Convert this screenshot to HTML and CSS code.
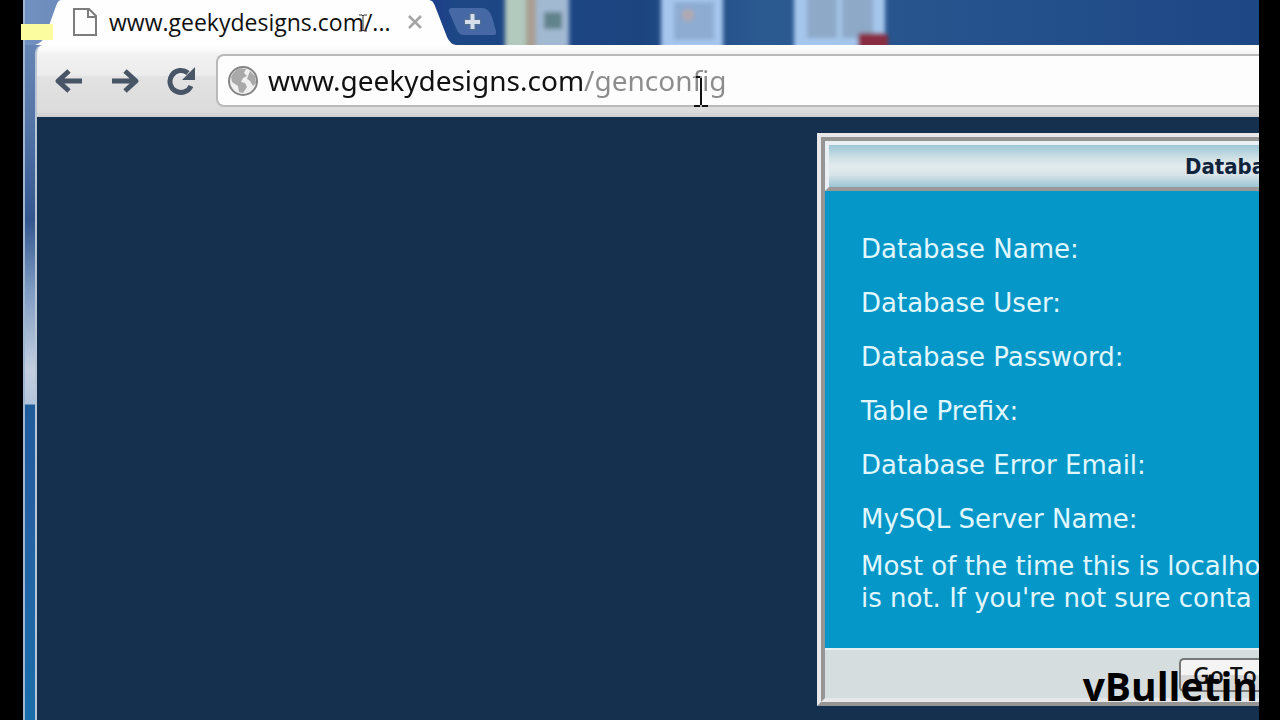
FILE: index.html
```html
<!DOCTYPE html>
<html lang="en">
<head>
<meta charset="utf-8">
<title>www.geekydesigns.com/genconfig</title>
<link rel="stylesheet" href="styles.css">
</head>
<body>
<div class="screen">
  <div class="window">
    <header class="tabstrip">
      <svg class="wallpaper" width="1236" height="45" viewBox="0 0 1236 45" aria-hidden="true">
        <defs>
          <filter id="soft" x="-20%" y="-20%" width="140%" height="140%"><feGaussianBlur stdDeviation="2"/></filter>
          <linearGradient id="sky"><stop offset="0" stop-color="#7391c0"/><stop offset=".03" stop-color="#6d8bbb"/><stop offset=".3" stop-color="#1d2f96"/><stop offset=".35" stop-color="#1d4785"/><stop offset=".5" stop-color="#1c4580"/><stop offset=".6" stop-color="#2b5a91"/><stop offset="1" stop-color="#1d4785"/></linearGradient>
        </defs>
        <rect width="1236" height="45" fill="url(#sky)"/>
        <g filter="url(#soft)">
          <rect x="482" y="-8" width="64" height="62" fill="#a2b9d2"/>
          <rect x="482" y="-8" width="21" height="62" fill="#b2c9bd"/>
          <rect x="503" y="-8" width="10" height="62" fill="#a99f92"/>
          <rect x="521" y="12" width="18" height="17" fill="#60838c"/>
          <rect x="638" y="-8" width="62" height="62" fill="#a6c6ed"/>
          <rect x="651" y="2" width="40" height="38" fill="#8eacd2"/>
          <circle cx="665" cy="15" r="6" fill="#b3a9ae"/>
          <rect x="771" y="-8" width="91" height="62" fill="#a5c6ed"/>
          <rect x="784" y="-4" width="66" height="42" fill="#8ea9c8"/>
          <rect x="814" y="-4" width="5" height="50" fill="#a5c6e8"/>
          <rect x="835" y="33" width="30" height="20" rx="4" fill="#892f43"/>
        </g>
        <path d="M12 45C17 43 20 41 23 34L33 6Q35 0 38 0H406Q410 0 412 6L424 37Q427 44 433 45Z" fill="#fefefe"/>
        <path d="M0 0V45" stroke="#a9bed8" stroke-width="3"/>
      </svg>
      <div class="tab">
        <svg width="26" height="28" viewBox="0 0 26 28" fill="#fdfdfd" stroke="#7c7c7c" stroke-width="2" aria-hidden="true"><path d="M2 1H17L24 8V27H2ZM16 1V9H24"/></svg>
        <span class="tab-title">www.geekydesigns.com/...</span>
        <button class="close" aria-label="Close tab"><svg width="14" height="14" viewBox="0 0 14 14" stroke="#a4a4a4" stroke-width="2.500"><path d="M1 1L13 13M13 1L1 13"/></svg></button>
      </div>
      <button class="newtab" aria-label="New tab"><svg width="48" height="30" viewBox="0 0 48 30"><path d="M4 1H34Q41 1 44 10L48 24Q49 28 46 28H16Q11 28 9 23L1 5Q0 1 4 1Z" fill="#4668a5"/><path d="M16 15H33M24.500 6V23" stroke="#526d96" stroke-width="7"/><path d="M17 15H32M24.500 7V22" stroke="#d5dfec" stroke-width="4"/></svg></button>
    </header>
    <div class="frame">
      <nav class="toolbar">
        <button class="tool" aria-label="Back"><svg width="30" height="28" viewBox="0 0 30 28"><path d="M28 14H5M15 4L4 14L15 24" fill="none" stroke="#475567" stroke-width="5" stroke-linejoin="round"/></svg></button>
        <button class="tool" aria-label="Forward"><svg width="30" height="28" viewBox="0 0 30 28"><path d="M2 14H25M15 4L26 14L15 24" fill="none" stroke="#475567" stroke-width="5" stroke-linejoin="round"/></svg></button>
        <button class="tool" aria-label="Reload"><svg width="30" height="28" viewBox="0 0 30 28"><path d="M25 19A11 11 0 1 1 22 6" fill="none" stroke="#475567" stroke-width="5"/><path d="M29 0V13H16Z" fill="#475567"/></svg></button>
        <div class="omnibox">
          <svg width="32" height="32" viewBox="0 0 32 32" aria-hidden="true"><circle cx="16" cy="16" r="14" fill="#f0f0f0" stroke="#858585" stroke-width="2"/><path d="M6 8L12 3L19 4L17 8L20 11L16 13L14 17L18 18L20 22L16 28L12 27L11 21L5 17L4 12ZM23 6L28 11L29 18L26 21L23 16L20 14Z" fill="#a9a9a9"/></svg>
          <input class="url" type="text" aria-label="Address" value="www.geekydesigns.com/genconfig">
        </div>
      </nav>
      <main class="page">
        <section class="panel">
          <h1 class="panel-head">Databa</h1>
          <div class="panel-body">
            <p class="field">Database Name:</p>
            <p class="field">Database User:</p>
            <p class="field">Database Password:</p>
            <p class="field">Table Prefix:</p>
            <p class="field">Database Error Email:</p>
            <p class="field">MySQL Server Name:</p>
            <p class="note">Most of the time this is localho<br>is not. If you're not sure conta</p>
          </div>
          <div class="panel-foot"><button class="go">Go To</button></div>
        </section>
      </main>
    </div>
    <div class="caption">vBulletin</div>
  </div>
  <div class="marker"></div>
  <svg class="ibeam" width="16" height="34" viewBox="0 0 16 34" fill="none" stroke="#111" stroke-width="2" aria-hidden="true"><path d="M8 5V32M1 33H7M9 33H15M3 4H7"/></svg>
  <svg class="ibeam-small" width="10" height="18" viewBox="0 0 10 18" fill="none" stroke="#333" aria-hidden="true"><path d="M1 1H4L5 2L6 1H9M5 2V16M1 17H4L5 16L6 17H9"/></svg>
</div>
</body>
</html>
```
FILE: styles.css
```css
* { box-sizing: border-box; }
body { margin: 0; background: #000; }
button { border: 0; padding: 0; background: none; display: flex; }
svg { display: block; flex: none; }

.screen {
  position: relative;
  min-height: 100vh;
  padding: 0 21px 0 23px;
  display: flex;
  background: #000;
}
.window {
  position: relative;
  flex: 1;
  min-width: 0;
  display: flex;
  flex-direction: column;
  overflow: hidden;
  border-left: 2px solid #9cb6d0;
  background: linear-gradient(#6f8dbb 0, #5676a8 120px, #33568f 220px, #7f9bc2 290px, #c3cfe0 370px, #b4c4da 404px, #1f5c9c 405px, #2461a2 520px, #1a6dac 720px);
}
.tabstrip {
  position: relative;
  height: 45px;
  padding-bottom: 2px;
  display: flex;
  align-items: center;
}
.wallpaper { position: absolute; top: 0; left: -2px; }
.tab {
  position: relative;
  width: 423px;
  padding: 0 26px 0 47px;
  display: flex;
  align-items: center;
  gap: 11px;
}
.tab-title {
  flex: 1;
  font: 23px/32px "Open Sans", "Noto Sans", sans-serif;
  color: #111;
  white-space: nowrap;
}
.newtab { position: relative; }

.frame {
  flex: 1;
  margin-left: 10px;
  border-left: 2px solid #b9c6d6;
  border-top-left-radius: 8px;
  display: flex;
  flex-direction: column;
  overflow: hidden;
}
.toolbar {
  height: 72px;
  padding: 0 0 1px 17px;
  display: flex;
  align-items: center;
  gap: 26px;
  background: linear-gradient(#fefefe 0, #fafafa 5px, #f1f1f1 10px, #ececec 30px, #e2e2e2 32px, #dcdcdc 66px, #cdcdcd 72px);
}
.omnibox {
  flex: 1;
  height: 53px;
  margin-left: -6px;
  padding-left: 9px;
  display: flex;
  align-items: center;
  gap: 9px;
  background: #fefdfd;
  border: 2px solid #b9b9b9;
  border-right: 0;
  border-radius: 8px 0 0 8px;
}
.url {
  flex: 1;
  min-width: 0;
  padding: 0 0 2px;
  border: 0;
  outline: 0;
  font: 28px/40px "Noto Sans", "Open Sans", sans-serif;
  color: transparent;
  background: linear-gradient(90deg, #111 315px, #8c8c8c 315px);
  -webkit-background-clip: text;
  background-clip: text;
}
.page {
  flex: 1;
  padding: 16px 0 14px 780px;
  background: #15304f;
}
.panel {
  border: 8px ridge #e6e6e8;
  border-color: #e8e8ea;
  border-right: 0;
  background: #0597c8;
  overflow: hidden;
}
.panel-head {
  margin: 0;
  height: 50px;
  padding-left: 356px;
  border: 4px solid #e9eff2;
  border-bottom-color: #999;
  border-right: 0;
  background: linear-gradient(#9cc6d5, #cddfe5 30%, #e3ebee 50%, #d9e4e8 70%, #9dc5d5);
  font: bold 22px/44px "DejaVu Sans Condensed", "DejaVu Sans", sans-serif;
  color: #10233c;
  white-space: nowrap;
}
.panel-body {
  height: 457px;
  padding: 31px 0 0 36px;
  font: 26px/32px "DejaVu Sans", sans-serif;
  color: #e1f7ff;
  white-space: nowrap;
}
.field { margin: 0; line-height: 54px; }
.note { margin: 4px 0 0; }
.panel-foot {
  height: 50px;
  padding: 8px 0 0 354px;
  border-top: 2px solid #e6eef0;
  background: #d6dddf;
}
.go {
  width: 100%;
  height: 34px;
  padding-left: 12px;
  align-items: center;
  border: 2px solid #777;
  border-right: 0;
  border-radius: 5px 0 0 5px;
  background: linear-gradient(#f4f4f4 50%, #d8d8d8 50%);
  font: 600 23px/30px "Open Sans", "Noto Sans", sans-serif;
  color: #111;
  white-space: nowrap;
}
.caption {
  position: absolute;
  right: 1px;
  bottom: 8px;
  font: bold 39px/52px "Open Sans", "Noto Sans", sans-serif;
  color: #000;
}
.marker {
  position: absolute;
  left: 21px;
  top: 24px;
  width: 32px;
  height: 16px;
  background: #fbfba0;
}
.ibeam { position: absolute; left: 693px; top: 73px; }
.ibeam-small { position: absolute; left: 358px; top: 14px; }
```
